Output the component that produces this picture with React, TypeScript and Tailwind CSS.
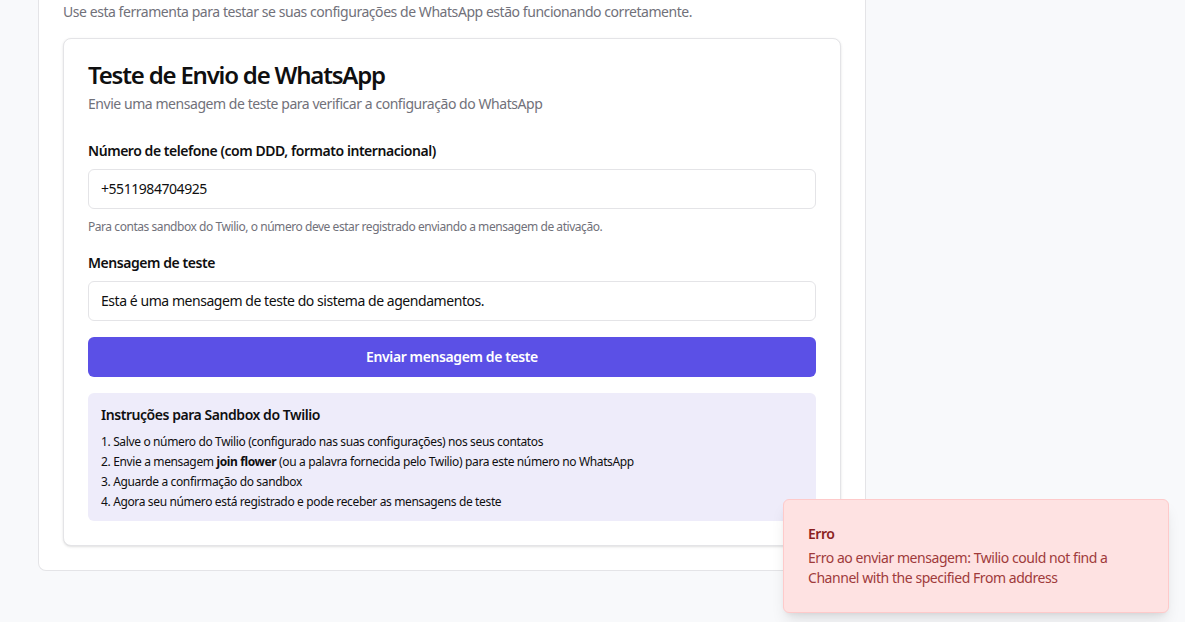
import React from "react";

const instructions: React.ReactNode[] = [
  "Salve o número do Twilio (configurado nas suas configurações) nos seus contatos",
  <>
    Envie a mensagem <strong className="font-bold">join flower</strong> (ou a palavra fornecida pelo Twilio) para este número no WhatsApp
  </>,
  "Aguarde a confirmação do sandbox",
  "Agora seu número está registrado e pode receber as mensagens de teste",
];

export default function App() {
  return (
    <div className="min-h-[622px] bg-[#f8f9fb] font-['Noto_Sans',sans-serif] tracking-[-0.028em] text-[#0f0f10] relative">
      <div className="pl-[38px] w-[866px]">
        {/* outer card, top scrolled out of view */}
        <div className="bg-white border-x border-b border-[#e4e4e7] rounded-b-lg px-6 pt-[2px] pb-6">
          <p className="text-sm leading-5 text-[#71717a] mb-4">
            Use esta ferramenta para testar se suas configurações de WhatsApp estão funcionando corretamente.
          </p>

          <div className="bg-white border border-[#e4e4e7] rounded-lg shadow-sm">
            <div className="px-6 pt-6 pb-6 flex flex-col gap-[7px]">
              <h1 className="text-2xl leading-6 font-semibold tracking-[-0.05em]">Teste de Envio de WhatsApp</h1>
              <p className="text-sm leading-5 text-[#71717a]">Envie uma mensagem de teste para verificar a configuração do WhatsApp</p>
            </div>

            <div className="px-6 pb-6 pt-[3px]">
              <label className="block text-sm leading-5 font-semibold mb-2">Número de telefone (com DDD, formato internacional)</label>
              <div className="h-10 border border-[#e4e4e7] rounded-md px-3 flex items-center text-sm">+5511984704925</div>
              <p className="text-xs leading-4 text-[#71717a] mt-[10px]">
                Para contas sandbox do Twilio, o número deve estar registrado enviando a mensagem de ativação.
              </p>

              <label className="block text-sm leading-5 font-semibold mt-[18px] mb-2">Mensagem de teste</label>
              <div className="h-10 border border-[#e4e4e7] rounded-md px-3 flex items-center text-sm">
                Esta é uma mensagem de teste do sistema de agendamentos.
              </div>

              <button className="mt-4 w-full h-10 rounded-md bg-[#5b50e6] text-white text-sm font-semibold tracking-[-0.028em]">
                Enviar mensagem de teste
              </button>

              <div className="mt-4 rounded-md bg-[#eeecfa] px-[13px] pt-3 pb-[9px]">
                <h3 className="text-sm leading-5 font-semibold mb-[7px]">Instruções para Sandbox do Twilio</h3>
                <ol className="text-xs leading-5 tracking-[-0.03em]">
                  {instructions.map((item, i) => (
                    <li key={i}>
                      {i + 1}. {item}
                    </li>
                  ))}
                </ol>
              </div>
            </div>
          </div>
        </div>
      </div>

      {/* toast */}
      <div className="absolute left-[783px] top-[499px] w-[386px] rounded-md border border-[#fecaca] bg-[#fee2e2] shadow-lg p-6 pr-8 grid gap-1">
        <div className="text-sm leading-5 font-semibold text-[#8a1f1f]">Erro</div>
        <div className="text-sm leading-5 text-[#a03b3b]">
          Erro ao enviar mensagem: Twilio could not find a Channel with the specified From address
        </div>
      </div>
    </div>
  );
}
